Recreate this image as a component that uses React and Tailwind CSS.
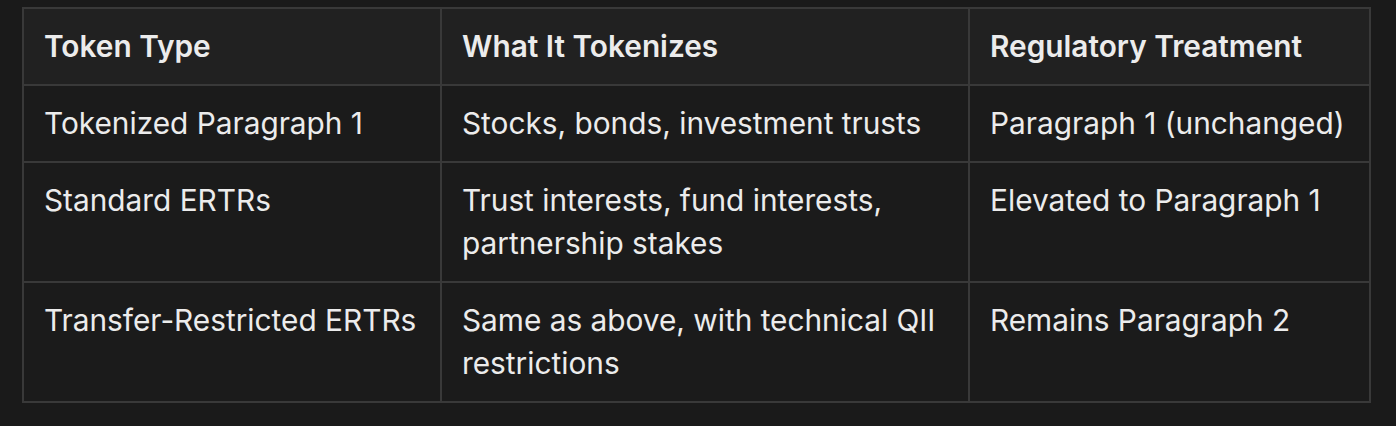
import React from "react";

const rows = [
  ["Tokenized Paragraph 1", "Stocks, bonds, investment trusts", "Paragraph 1 (unchanged)"],
  ["Standard ERTRs", "Trust interests, fund interests, partnership stakes", "Elevated to Paragraph 1"],
  ["Transfer-Restricted ERTRs", "Same as above, with technical QII restrictions", "Remains Paragraph 2"],
];

const App = () => {
  return (
    <div
      className="w-[1396px] h-[426px] bg-[#1a1a1a] pt-[7px] pl-[22px] text-[#ececec]"
      style={{ fontFamily: "Inter, 'Noto Sans', sans-serif" }}
    >
      <table className="table-fixed border-collapse w-[1347px] text-[29.8px] leading-[43px]">
        <colgroup>
          <col className="w-[418px]" />
          <col className="w-[528px]" />
          <col className="w-[401px]" />
        </colgroup>
        <thead>
          <tr className="bg-[#212121]">
            <th className="border-2 border-[#393939] text-left font-semibold pl-[20px] pr-[18px] py-4">Token Type</th>
            <th className="border-2 border-[#393939] text-left font-semibold pl-[20px] pr-[18px] py-4">What It Tokenizes</th>
            <th className="border-2 border-[#393939] text-left font-semibold pl-[20px] pr-[18px] py-4">Regulatory Treatment</th>
          </tr>
        </thead>
        <tbody>
          {rows.map((r, i) => (
            <tr key={i} className="bg-[#1b1b1b]">
              {r.map((c, j) => (
                <td key={j} className="border-2 border-[#393939] align-top pl-[20px] pr-[18px] py-4">
                  {c}
                </td>
              ))}
            </tr>
          ))}
        </tbody>
      </table>
    </div>
  );
};

export default App;
